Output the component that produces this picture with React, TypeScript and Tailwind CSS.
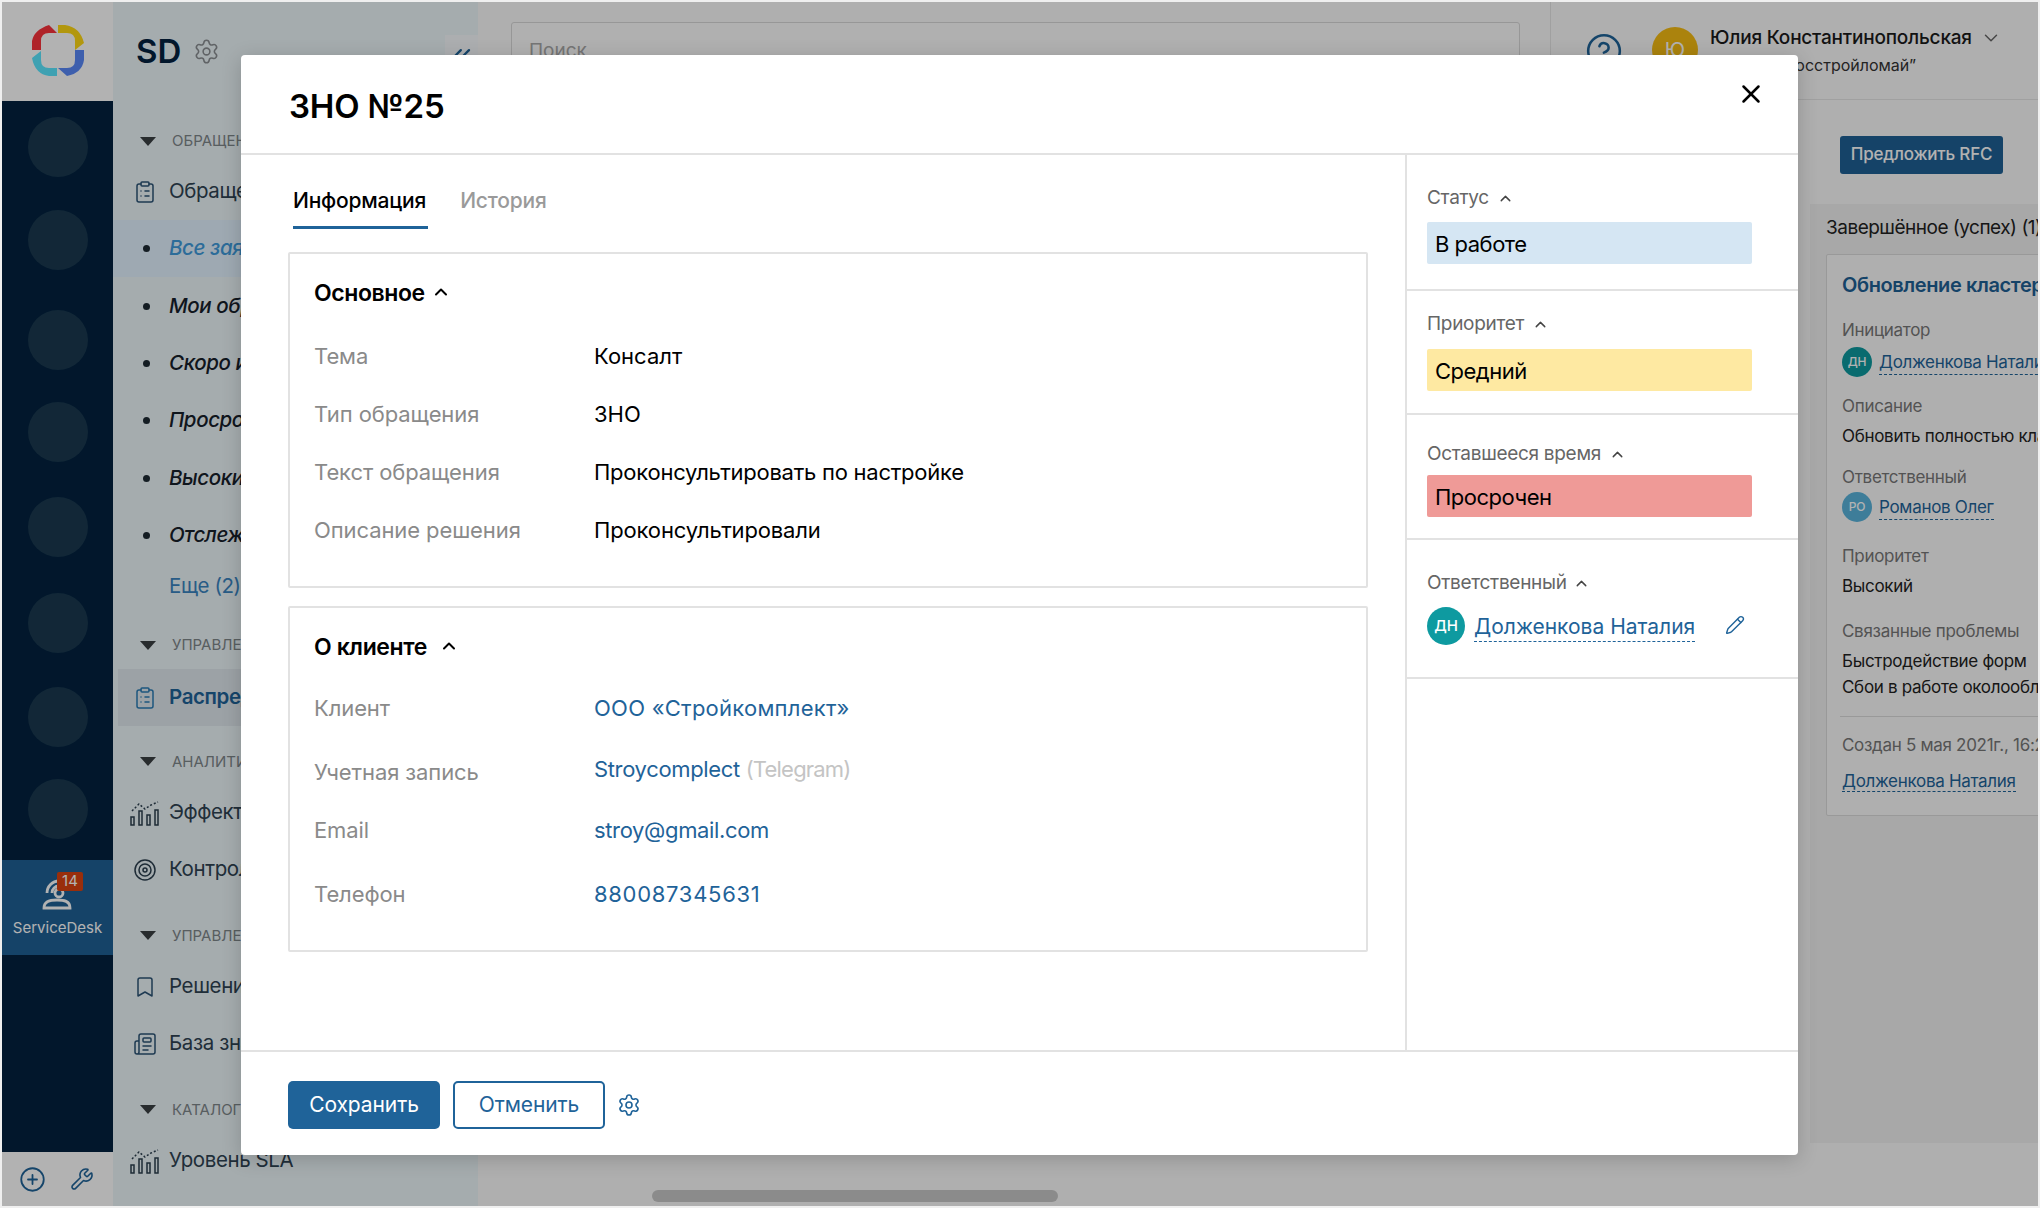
import { Bookmark, ChevronDown, ChevronUp, ChevronsLeft, CircleHelp, CirclePlus, ClipboardList, Newspaper, Pencil, Settings, Target, Wrench, X } from 'lucide-react';
import type { ReactNode } from 'react';

const railGaps = ['mt-[16px]', 'mt-[33px]', 'mt-[40px]', 'mt-[32px]', 'mt-[35px]', 'mt-[36px]', 'mt-[34px]', 'mt-[32px]'];

const Logo = () => (
  <svg width="52" height="52" viewBox="0 0 52 52">
    <path d="M0 25 L0 16 Q2 5 17 0 L25 8 L17 8 Q9 8 9 16 L9 25 Z" fill="#fb333c" />
    <path d="M26 0 L33 0 Q48 2 52 18 L43 25 L43 16 Q43 8 35 8 L26 8 Z" fill="#ffd915" />
    <path d="M52 25 L52 35 Q50 48 35 51 L26 43 L35 43 Q43 43 43 35 L43 25 Z" fill="#5a89f8" />
    <path d="M9 26 L9 35 Q9 43 17 43 L25 43 L25 51 L17 51 Q3 49 0 33 Z" fill="#5be7ff" />
  </svg>
);

const ChartIcon = () => (
  <svg width="30" height="26" viewBox="0 0 30 26" fill="none" stroke="#2b3f4e" strokeWidth="1.5">
    <path d="M2 11 L9 4 L15 9 L21 5 L28 2" strokeDasharray="2 2" />
    <rect x="1" y="17" width="3" height="8" />
    <rect x="9" y="11" width="3" height="14" />
    <rect x="17" y="15" width="3" height="10" />
    <rect x="25" y="10" width="3" height="15" />
  </svg>
);

const SupportIcon = () => (
  <svg width="30" height="32" viewBox="0 0 30 32" fill="none" stroke="#ffffff" strokeWidth="2.8">
    <circle cx="17" cy="15" r="4" />
    <path d="M5 15 A12 12 0 0 1 17 3" />
    <path d="M10 15 A7 7 0 0 1 17 8" />
    <path d="M2 30 C2 23 8 22 15 22 C22 22 28 23 28 30 Z" />
  </svg>
);

const Caret = () => (
  <svg width="16" height="9" viewBox="0 0 16 9"><path d="M0 0 H16 L8 9 Z" fill="#3a3f42" /></svg>
);

const sidebarIcons: Record<string, ReactNode> = {
  list: <ClipboardList size={24} strokeWidth={1.5} color="#2b5476" />,
  dist: <ClipboardList size={24} strokeWidth={1.5} color="#2a7cb5" />,
  chart: <ChartIcon />,
  target: <Target size={24} strokeWidth={1.5} color="#2b3f4e" />,
  mark: <Bookmark size={24} strokeWidth={1.5} color="#2b5476" />,
  book: <Newspaper size={24} strokeWidth={1.5} color="#2b5476" />,
};

const SectionRow = ({ label, cls }: { label: string; cls: string }) => (
  <div className={`flex items-center pl-[27px] ${cls}`}>
    <Caret />
    <span className="ml-[16px] text-[15px] text-[#7f878a] whitespace-nowrap">{label}</span>
  </div>
);

const IconRow = ({ icon, label, active }: { icon: string; label: string; active?: boolean }) => (
  <div className={`flex h-[57px] items-center ${active ? 'ml-[5px] bg-[#e0e9ee] pl-[14px]' : 'pl-[19px]'}`}>
    <span className="flex w-[37px] justify-center -ml-[6px]">{sidebarIcons[icon]}</span>
    <span className={`ml-[6px] whitespace-nowrap text-[20.5px] tracking-[-0.4px] ${active ? 'font-semibold text-[#1f6399]' : 'text-[#2f4352]'}`}>{label}</span>
  </div>
);

const FilterRow = ({ label, active }: { label: string; active?: boolean }) => (
  <div className={`flex h-[57.4px] items-center pl-[30px] ${active ? 'bg-[#e2f3ff]' : ''}`}>
    <span className="h-[7px] w-[7px] rounded-full bg-[#1e2a33]" />
    <span className={`ml-[19px] whitespace-nowrap text-[20.5px] italic tracking-[-0.4px] ${active ? 'font-medium text-[#3f9bdc]' : 'font-medium text-[#16202a]'}`}>{label}</span>
  </div>
);

const Rail = () => (
  <div className="flex w-[111px] shrink-0 flex-col">
    <div className="flex h-[99px] items-center justify-center bg-white pb-[1px]"><Logo /></div>
    <div className="flex h-[1051px] flex-col bg-[#03223f]">
      <div className="flex flex-col items-center">
        {railGaps.map((gap, i) => (
          <div key={i} className={`h-[60px] w-[60px] shrink-0 rounded-full bg-[#1a3950] ${gap}`} />
        ))}
      </div>
      <div className="relative mt-[21px] flex h-[95px] flex-col items-center bg-[#1f6195] pt-[18px]">
        <div className="mr-[2px]"><SupportIcon /></div>
        <span className="absolute left-[55px] top-[12px] flex h-[19px] w-[26px] items-center justify-center rounded-[2px] bg-[#dc4310] text-[15px] text-white">14</span>
        <span className="mt-[7px] text-[15px] leading-[22px] text-white">ServiceDesk</span>
      </div>
    </div>
    <div className="flex flex-1 items-center gap-[24px] bg-white pl-[17px]">
      <CirclePlus size={27} strokeWidth={1.6} color="#1f6399" />
      <Wrench size={24} strokeWidth={1.6} color="#1f6399" />
    </div>
  </div>
);

const Sidebar = () => (
  <div className="relative w-[365px] shrink-0 overflow-hidden bg-[#edf6fa]">
    <div className="flex h-[99px] items-center pl-[23px]">
      <span className="text-[33px] font-semibold leading-none text-[#03223f]">SD</span>
      <Settings size={27} strokeWidth={1.4} color="#8a8f92" className="ml-[12px]" />
    </div>
    <SectionRow label="ОБРАЩЕНИЯ" cls="h-[62px] pt-[19px]" />
    <IconRow icon="list" label="Обращения" />
    <FilterRow label="Все заявки" active />
    <FilterRow label="Мои обращения" />
    <FilterRow label="Скоро истекают" />
    <FilterRow label="Просроченные" />
    <FilterRow label="Высокий приоритет" />
    <FilterRow label="Отслеживаемые" />
    <div className="flex h-[48px] items-center pb-[4px] pl-[56px] text-[20.5px] tracking-[-0.4px] text-[#3a85c0]">Еще (2)</div>
    <SectionRow label="УПРАВЛЕНИЕ" cls="h-[57px] pt-[9px]" />
    <IconRow icon="dist" label="Распределение" active />
    <SectionRow label="АНАЛИТИКА" cls="h-[58px] pt-[13px]" />
    <IconRow icon="chart" label="Эффективность" />
    <IconRow icon="target" label="Контроль" />
    <SectionRow label="УПРАВЛЕНИЕ" cls="h-[60px] pt-[15px]" />
    <IconRow icon="mark" label="Решения" />
    <IconRow icon="book" label="База знаний" />
    <SectionRow label="КАТАЛОГ" cls="h-[60px] pt-[15px]" />
    <IconRow icon="chart" label="Уровень SLA" />
    <div className="absolute left-[332px] top-[33px] flex h-[40px] w-[33px] items-start justify-center bg-[#f6fafc] pt-[7px]">
      <ChevronsLeft size={28} color="#1f6399" />
    </div>
  </div>
);

const Person = ({ initials, name, color, gap }: { initials: string; name: string; color: string; gap: string }) => (
  <div className={`flex h-[30px] items-center ${gap}`}>
    <span className={`flex h-[30px] w-[30px] items-center justify-center rounded-full text-[12px] font-medium text-white ${color}`}>{initials}</span>
    <span className="ml-[7px] whitespace-nowrap border-b border-dashed border-[#1f6399] text-[17px] tracking-[-0.3px] text-[#1f6399]">{name}</span>
  </div>
);

const Main = () => (
  <div className="flex min-w-0 flex-1 flex-col overflow-hidden bg-[#fbfbfb]">
    <div className="flex h-[98px] shrink-0 border-b border-[#e6e6e6]">
      <div className="ml-[33px] mt-[20px] h-[44px] w-[1009px] rounded-[3px] border border-[#d8d8d8] bg-[#fdfdfd] pl-[17px] pt-[18px] text-[19px] leading-none text-[#a8a8a8]">Поиск</div>
      <div className="ml-[30px] flex flex-1 items-start border-l border-[#e6e6e6] pl-[34px]">
        <CircleHelp size={38} strokeWidth={1.6} color="#1f6399" className="mt-[30px]" />
        <span className="ml-[29px] mt-[25px] flex h-[46px] w-[46px] items-center justify-center rounded-full bg-[#f5bc14] text-[20px] text-white">Ю</span>
        <div className="ml-[12px] mt-[23px] w-[300px]">
          <div className="flex items-center whitespace-nowrap text-[19px] font-medium leading-[26px] tracking-[-0.2px] text-[#1a1a1a]">
            Юлия Константинопольская
            <ChevronDown size={22} strokeWidth={1.6} color="#666666" className="ml-[8px]" />
          </div>
          <div className="mt-[2px] whitespace-nowrap text-[16px] leading-[24px] text-[#333333]">ООО СК “Росстройломай”</div>
        </div>
      </div>
    </div>
    <div className="mr-[35px] mt-[36px] flex h-[38px] w-[163px] shrink-0 items-center justify-center self-end rounded-[3px] bg-[#1f6195] text-[17px] font-medium tracking-[-0.2px] text-white">Предложить RFC</div>
    <div className="ml-auto mt-[30px] h-[939px] w-[228px] shrink-0 overflow-hidden bg-[#f1f1f1]">
      <div className="ml-[16px] mt-[11px] whitespace-nowrap text-[19px] leading-[26px] tracking-[-0.5px] text-[#222222]">Завершённое (успех) (1)</div>
      <div className="ml-[16px] mt-[13px] h-[562px] w-[400px] rounded-[2px] border border-[#dcdcdc] bg-[#fbfbfb] pl-[15px] pt-[17px] text-[17px] leading-[24px] tracking-[-0.3px]">
        <div className="whitespace-nowrap text-[20px] font-semibold leading-[26px] tracking-[-0.4px] text-[#1f6195]">Обновление кластеров</div>
        <div className="mt-[20px] text-[#777777]">Инициатор</div>
        <Person initials="ДН" name="Долженкова Наталия" color="bg-[#0e9aa0]" gap="mt-[5px]" />
        <div className="mt-[17px] text-[#777777]">Описание</div>
        <div className="mt-[6px] whitespace-nowrap text-[#222222]">Обновить полностью кластер серверов</div>
        <div className="mt-[17px] text-[#777777]">Ответственный</div>
        <Person initials="РО" name="Романов Олег" color="bg-[#5ab4dc]" gap="mt-[3px]" />
        <div className="mt-[22px] text-[#777777]">Приоритет</div>
        <div className="mt-[6px] text-[#222222]">Высокий</div>
        <div className="mt-[21px] text-[#777777]">Связанные проблемы</div>
        <div className="mt-[6px] whitespace-nowrap text-[#222222]">Быстродействие форм</div>
        <div className="mt-[2px] whitespace-nowrap text-[#222222]">Сбои в работе околооблачных сервисов</div>
        <div className="-ml-[2px] mt-[17px] border-t border-[#dcdcdc]" />
        <div className="mt-[16px] whitespace-nowrap text-[#777777]">Создан 5 мая 2021г., 16:20</div>
        <div className="mt-[12px]"><span className="whitespace-nowrap border-b border-dashed border-[#1f6399] text-[#1f6399]">Долженкова Наталия</span></div>
      </div>
    </div>
  </div>
);

const InfoRow = ({ label, gap, children }: { label: string; gap: string; children: ReactNode }) => (
  <div className={`flex h-[30px] items-center text-[22px] ${gap}`}>
    <span className="w-[280px] shrink-0 tracking-[-0.1px] text-[#8a8a8a]">{label}</span>
    {children}
  </div>
);

const SideLabel = ({ label, gap }: { label: string; gap: string }) => (
  <div className="flex h-[26px] items-center text-[19px] tracking-[-0.3px] text-[#666666]">
    {label}
    <ChevronUp size={17} strokeWidth={2} color="#444444" className={gap} />
  </div>
);

const SideBox = ({ label, cls, gap }: { label: string; cls: string; gap: string }) => (
  <div className={`flex h-[42px] w-[325px] items-center rounded-[2px] pl-[8px] pt-[3px] text-[22px] tracking-[-0.5px] text-black ${cls} ${gap}`}>{label}</div>
);

const Modal = () => (
  <div className="absolute left-[239px] top-[53px] flex h-[1100px] w-[1557px] flex-col rounded-[4px] bg-white shadow-[0_4px_20px_rgba(0,0,0,0.18)]">
    <div className="relative flex h-[100px] shrink-0 items-center border-b-2 border-[#e2e2e2] pl-[48px] pt-[6px]">
      <h1 className="text-[33px] font-semibold tracking-[-0.2px] text-black">ЗНО №25</h1>
      <X size={30} strokeWidth={2} color="#000000" className="absolute right-[32px] top-[24px]" />
    </div>
    <div className="flex min-h-0 flex-1">
      <div className="w-[1166px] shrink-0 border-r-2 border-[#e2e2e2] pl-[47px]">
        <div className="flex h-[74px] items-end pl-[5px] text-[21px] tracking-[-0.2px]">
          <div className="flex h-[54px] items-start border-b-[3px] border-[#1f6399] pr-[2px] pt-[10px] font-medium text-black">Информация</div>
          <div className="ml-[32px] flex h-[54px] items-start pt-[10px] font-medium text-[#9a9a9a]">История</div>
        </div>
        <div className="mt-[23px] h-[336px] w-[1080px] rounded-[2px] border-2 border-[#e2e2e2] pl-[24px]">
          <div className="flex h-[73px] items-start pt-[25px] text-[23px] font-semibold leading-[28px] tracking-[-0.4px] text-black">
            Основное
            <ChevronUp size={20} strokeWidth={2.4} color="#000000" className="ml-[6px] mt-[3px]" />
          </div>
          <InfoRow label="Тема" gap="mt-[14px]"><span className="text-black">Консалт</span></InfoRow>
          <InfoRow label="Тип обращения" gap="mt-[28px]"><span className="text-black">ЗНО</span></InfoRow>
          <InfoRow label="Текст обращения" gap="mt-[28px]"><span className="tracking-[-0.25px] text-black">Проконсультировать по настройке</span></InfoRow>
          <InfoRow label="Описание решения" gap="mt-[28px]"><span className="tracking-[-0.15px] text-black">Проконсультировали</span></InfoRow>
        </div>
        <div className="mt-[18px] h-[346px] w-[1080px] rounded-[2px] border-2 border-[#e2e2e2] pl-[24px]">
          <div className="flex h-[73px] items-start pt-[25px] text-[23px] font-semibold leading-[28px] tracking-[-0.4px] text-black">
            О клиенте
            <ChevronUp size={20} strokeWidth={2.4} color="#000000" className="ml-[12px] mt-[3px]" />
          </div>
          <InfoRow label="Клиент" gap="mt-[12px]"><span className="tracking-[0.25px] text-[#1f6399]">ООО «Стройкомплект»</span></InfoRow>
          <InfoRow label="Учетная запись" gap="mt-[34px]">
            <span className="pb-[5px] tracking-[-0.35px] text-[#1f6399]">Stroycomplect <span className="tracking-[-0.8px] text-[#c4c4c4]">(Telegram)</span></span>
          </InfoRow>
          <InfoRow label="Email" gap="mt-[28px]"><span className="tracking-[-0.35px] text-[#1f6399]">stroy@gmail.com</span></InfoRow>
          <InfoRow label="Телефон" gap="mt-[34px]"><span className="tracking-[0.7px] text-[#1f6399]">880087345631</span></InfoRow>
        </div>
      </div>
      <div className="flex-1">
        <div className="h-[136px] border-b-2 border-[#e2e2e2] pl-[20px] pt-[30px]">
          <SideLabel label="Статус" gap="ml-[8px]" />
          <SideBox label="В работе" cls="bg-[#d5e6f3]" gap="mt-[11px]" />
        </div>
        <div className="h-[124px] border-b-2 border-[#e2e2e2] pl-[20px] pt-[20px]">
          <SideLabel label="Приоритет" gap="ml-[8px]" />
          <SideBox label="Средний" cls="bg-[#fee9a2]" gap="mt-[12px]" />
        </div>
        <div className="h-[125px] border-b-2 border-[#e2e2e2] pl-[20px] pt-[26px]">
          <SideLabel label="Оставшееся время" gap="ml-[8px]" />
          <SideBox label="Просрочен" cls="bg-[#ef9a97]" gap="mt-[8px]" />
        </div>
        <div className="h-[139px] border-b-2 border-[#e2e2e2] pl-[20px] pt-[30px]">
          <SideLabel label="Ответственный" gap="ml-[6px]" />
          <div className="mt-[11px] flex items-center">
            <span className="flex h-[38px] w-[38px] items-center justify-center rounded-full bg-[#0e9aa0] text-[15px] font-medium text-white">ДН</span>
            <span className="ml-[9px] mt-[2px] whitespace-nowrap border-b border-dashed border-[#1f6399] text-[21px] leading-[28px] text-[#1f6399]">Долженкова Наталия</span>
            <Pencil size={20} strokeWidth={1.7} color="#1f6399" className="ml-[30px] -mt-[3px]" />
          </div>
        </div>
      </div>
    </div>
    <div className="flex h-[105px] shrink-0 items-start border-t-2 border-[#e2e2e2] pl-[47px] pt-[29px]">
      <button className="h-[48px] w-[152px] rounded-[5px] bg-[#1f6399] text-[21px] tracking-[-0.1px] text-white">Сохранить</button>
      <button className="ml-[13px] h-[48px] w-[152px] rounded-[5px] border-2 border-[#1f6399] bg-white text-[21px] tracking-[-0.1px] text-[#1f6399]">Отменить</button>
      <Settings size={24} strokeWidth={1.6} color="#1f6399" className="ml-[12px] mt-[12px]" />
    </div>
  </div>
);

export default function App() {
  return (
    <div className="h-[1208px] w-[2040px] overflow-hidden bg-[#efefef] p-[2px] font-['Inter',sans-serif]">
      <div className="relative flex h-[1204px] w-[2036px] overflow-hidden">
        <Rail />
        <Sidebar />
        <Main />
        <div className="absolute left-[650px] top-[1188px] h-[12px] w-[406px] rounded-full bg-[#c8c8c8]" />
        {/* dimmed page behind the dialog */}
        <div className="absolute inset-0 bg-black/30" />
        <Modal />
      </div>
    </div>
  );
}
